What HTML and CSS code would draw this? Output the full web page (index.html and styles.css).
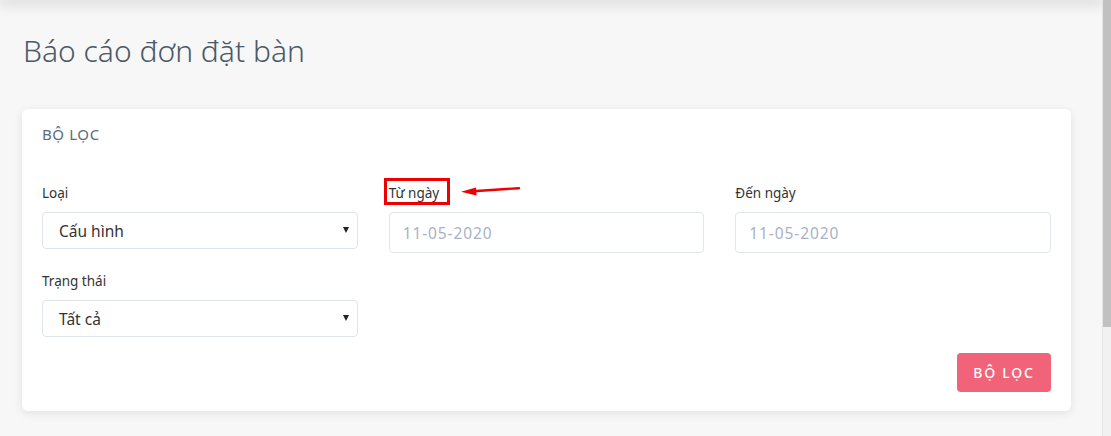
FILE: index.html
```html
<!DOCTYPE html>
<html lang="vi">
<head>
<meta charset="utf-8">
<link rel="stylesheet" href="styles.css">
</head>
<body>
<div class="page">
  <main class="main">
    <div class="topbar"></div>
    <h1 class="title">Báo cáo đơn đặt bàn</h1>
    <section class="card">
      <div class="card-title">BỘ LỌC</div>
      <div class="grid">
        <div class="field">
          <label class="label">Loại</label>
          <div class="select"><span>Cấu hình</span><i class="caret"></i></div>
        </div>
        <div class="field">
          <div class="label-wrap">
            <label class="label">Từ ngày</label>
            <span class="mark-box"></span>
            <svg class="mark-arrow" width="64" height="14" viewBox="0 0 64 14">
              <path d="M60 4.2 L14 7.2" stroke="#ee0000" stroke-width="2.4" fill="none" stroke-linecap="round"/>
              <path d="M2 7.8 L17 3.4 L17.5 11.6 Z" fill="#ee0000"/>
            </svg>
          </div>
          <div class="input">11-05-2020</div>
        </div>
        <div class="field">
          <label class="label">Đến ngày</label>
          <div class="input">11-05-2020</div>
        </div>
        <div class="field">
          <label class="label">Trạng thái</label>
          <div class="select"><span>Tất cả</span><i class="caret"></i></div>
        </div>
      </div>
      <div class="actions">
        <button class="btn">BỘ LỌC</button>
      </div>
    </section>
  </main>
  <aside class="scrollbar"><div class="thumb"></div></aside>
</div>
</body>
</html>
```

FILE: styles.css
```css
* { box-sizing: border-box; }
html, body { margin: 0; padding: 0; height: 100%; overflow: hidden; }
body {
  font-family: "Noto Sans", "Open Sans", sans-serif;
  background: #f7f7f7;
  color: #333;
}
.page {
  display: flex;
  width: 1111px;
  height: 436px;
}
.main {
  flex: 1;
  padding: 0 31px 0 22px;
  background: #f7f7f7;
}
.topbar {
  height: 0;
  margin: 0 -31px 0 -22px;
  box-shadow: 0 0 14px 3px rgba(0, 0, 0, 0.2);
}
.title {
  margin: 31px 0 0 1px;
  font-size: 30px;
  line-height: 40px;
  font-weight: 300;
  color: #4a5968;
}
.card {
  margin-top: 38px;
  background: #fff;
  border-radius: 6px;
  box-shadow: 0 2px 10px rgba(0, 0, 0, 0.09);
  padding: 15px 20px 19px 20px;
}
.card-title {
  font-size: 15px;
  line-height: 20px;
  color: #5b6b7b;
  letter-spacing: 0.6px;
}
.grid {
  margin-top: 39px;
  display: grid;
  grid-template-columns: repeat(3, 1fr);
  column-gap: 31px;
  row-gap: 18px;
}
.field {
  display: flex;
  flex-direction: column;
}
.label {
  font-size: 13.5px;
  line-height: 20px;
  color: #333;
  margin-bottom: 9px;
}
.label-wrap {
  position: relative;
  display: flex;
}
.mark-box {
  position: absolute;
  left: -5px;
  top: -5px;
  width: 66px;
  height: 27px;
  border: 3px solid #ee0000;
}
.mark-arrow {
  position: absolute;
  left: 70px;
  top: 1px;
}
.select {
  height: 37px;
  border: 1px solid #dfe3eb;
  border-radius: 4px;
  display: flex;
  align-items: center;
  justify-content: space-between;
  padding: 0 8px 0 16px;
  font-size: 15.5px;
  color: #333;
}
.caret {
  width: 0;
  height: 0;
  border-left: 3.5px solid transparent;
  border-right: 3.5px solid transparent;
  border-top: 6px solid #222;
  margin-top: -2px;
}
.input {
  height: 41px;
  border: 1px solid #e1e5ed;
  border-radius: 4px;
  display: flex;
  align-items: center;
  padding: 0 13px;
  font-size: 15.5px;
  letter-spacing: 0.9px;
  color: #a7b2c6;
}
.actions {
  display: flex;
  justify-content: flex-end;
  margin-top: 16px;
}
.btn {
  width: 94px;
  height: 39px;
  border: none;
  border-radius: 4px;
  background: #f16378;
  color: #fff;
  font-family: "Noto Sans", sans-serif;
  font-size: 14px;
  font-weight: 500;
  letter-spacing: 1.8px;
}
.scrollbar {
  width: 9px;
  background: #f1f1f1;
  border-left: 1px solid #e6e6e6;
}
.thumb {
  height: 327px;
  background: #c1c1c1;
}
```
